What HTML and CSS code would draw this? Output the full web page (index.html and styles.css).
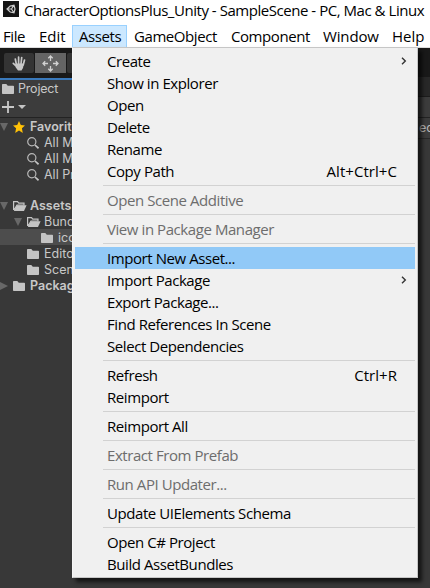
FILE: index.html
```html
<!DOCTYPE html>
<html lang="en">
<head>
<meta charset="utf-8">
<title>CharacterOptionsPlus_Unity</title>
<link rel="stylesheet" href="styles.css">
</head>
<body>
<svg class="defs" aria-hidden="true">
  <symbol id="folder" viewBox="0 0 12 10"><path d="M0 .8Q0 0 .8 0H4.300L5.800 1.700H11.200Q12 1.700 12 2.500V9.200Q12 10 11.200 10H.8Q0 10 0 9.200Z" fill="#c4c4c4"/></symbol>
  <symbol id="open" viewBox="0 0 14 10"><path d="M.6 9V.6H4.500L5.800 2.200H11V4H4L1 9" fill="none" stroke="#c4c4c4" stroke-width="1.200"/><path d="M3.800 4.300H13.600L11 10H.8Z" fill="#c4c4c4"/></symbol>
  <symbol id="search" viewBox="0 0 12 12"><circle cx="4.800" cy="4.800" r="4.100" fill="none" stroke="#b8b8b8" stroke-width="1.200"/><path d="M8 8L11.500 11.300" stroke="#c4c4c4" stroke-width="1.700"/></symbol>
  <symbol id="down" viewBox="0 0 8 8"><path d="M0 0H8L4 8Z" fill="#686868"/></symbol>
  <symbol id="chev" viewBox="0 0 6 8"><path d="M1 .8L4.300 4L1 7.200" fill="none" stroke="#333" stroke-width="1.400"/></symbol>
</svg>
<header class="title">
  <svg class="logo" viewBox="0 0 16 16"><path d="M0 0H16V16H0Z" fill="#141414"/><path d="M4 8L7.200 5L11 4.200L12 8L11 11.800L7.200 11ZM4 8H8.500L11 4.200M8.500 8L11 11.800" fill="none" stroke="#ccc" stroke-width="1.200"/></svg>
  <span class="caption">CharacterOptionsPlus_Unity - SampleScene - PC, Mac &amp; Linux</span>
</header>
<nav class="menubar">
  <span class="file">File</span><span class="edit">Edit</span><span class="assets">Assets</span><span class="object">GameObject</span><span class="component">Component</span><span class="window">Window</span><span class="help">Help</span>
</nav>
<main class="editor">
  <aside class="left">
    <div class="tools">
      <span class="tool"><svg width="15" height="15" viewBox="0 0 15 15"><path d="M4.500 9L3.300 3M6.600 8V1.200M9 8L9.700 1.500M11.200 9L12.500 4M5 11L1.300 7.300" fill="none" stroke="#c8c8c8" stroke-width="1.700" stroke-linecap="round"/><path d="M3.800 7.500H11.800L11 12L9.500 14.500H6L3.800 11.500Z" fill="#c8c8c8"/></svg></span>
      <span class="tool active"><svg width="17" height="17" viewBox="0 0 17 17"><path d="M8.500 1V6M8.500 11V16M1 8.500H6M11 8.500H16M6.300 3.200L8.500 1L10.700 3.200M6.300 13.800L8.500 16L10.700 13.800M3.200 6.300L1 8.500L3.200 10.700M13.800 6.300L16 8.500L13.800 10.700" fill="none" stroke="#d2d2d2" stroke-width="1.300"/></svg></span>
      <span class="tool"></span>
    </div>
    <div class="tab"><svg class="folder"><use href="#folder"/></svg>Project</div>
    <div class="add"><svg width="24" height="12" viewBox="0 0 24 12"><path d="M6 0V12M0 6H12" stroke="#c8c8c8" stroke-width="1.800"/><path d="M16 4H24L20 8Z" fill="#c4c4c4"/></svg></div>
    <div class="tree">
      <div class="node root"><svg class="arrow"><use href="#down"/></svg><svg class="star" viewBox="0 0 12 12"><path d="M6 0L7.800 4L12 4.400L8.900 7.300L9.800 12L6 9.600L2.200 12L3.100 7.300L0 4.400L4.200 4Z" fill="#ffc107"/></svg><span>Favorites</span></div>
      <div class="node d1"><svg class="search"><use href="#search"/></svg>All Materials</div>
      <div class="node d1"><svg class="search"><use href="#search"/></svg>All Models</div>
      <div class="node d1"><svg class="search"><use href="#search"/></svg>All Prefabs</div>
      <div class="node root project"><svg class="arrow"><use href="#down"/></svg><svg class="open"><use href="#open"/></svg><span>Assets</span></div>
      <div class="node bundle"><svg class="arrow"><use href="#down"/></svg><svg class="open"><use href="#open"/></svg>Bundles</div>
      <div class="node d2 selected"><svg class="folder"><use href="#folder"/></svg>icons</div>
      <div class="node d1"><svg class="folder"><use href="#folder"/></svg>Editor</div>
      <div class="node d1"><svg class="folder"><use href="#folder"/></svg>Scenes</div>
      <div class="node root"><svg class="arrow" viewBox="0 0 8 8"><path d="M0 0L8 4L0 8Z" fill="#686868"/></svg><svg class="folder"><use href="#folder"/></svg><span>Packages</span></div>
    </div>
  </aside>
  <section class="menu">
    <div class="item"><span>Create</span><svg class="chev"><use href="#chev"/></svg></div>
    <div class="item">Show in Explorer</div>
    <div class="item">Open</div>
    <div class="item">Delete</div>
    <div class="item">Rename</div>
    <div class="item"><span>Copy Path</span><span class="key">Alt+Ctrl+C</span></div>
    <hr>
    <div class="item off">Open Scene Additive</div>
    <hr>
    <div class="item off">View in Package Manager</div>
    <hr>
    <div class="item hot">Import New Asset...</div>
    <div class="item"><span>Import Package</span><svg class="chev"><use href="#chev"/></svg></div>
    <div class="item">Export Package...</div>
    <div class="item">Find References In Scene</div>
    <div class="item">Select Dependencies</div>
    <hr>
    <div class="item"><span>Refresh</span><span class="key">Ctrl+R</span></div>
    <div class="item">Reimport</div>
    <hr>
    <div class="item">Reimport All</div>
    <hr>
    <div class="item off">Extract From Prefab</div>
    <hr>
    <div class="item off">Run API Updater...</div>
    <hr>
    <div class="item">Update UIElements Schema</div>
    <hr>
    <div class="item">Open C# Project</div>
    <div class="item">Build AssetBundles</div>
  </section>
  <aside class="right"><div class="r1"></div><div class="r2"></div><div class="r3"></div><div class="r4">ed</div></aside>
</main>
</body>
</html>
```
FILE: styles.css
```css
* { box-sizing: border-box; }
body { margin: 0; width: 430px; height: 588px; overflow: hidden; background: #fff; color: #000; font: 15px/22px "Open Sans", "Noto Sans", sans-serif; letter-spacing: -.43px; }
svg { display: block; flex: none; }
.defs { position: absolute; width: 0; height: 0; }
.title { display: flex; height: 25px; padding-left: 3px; white-space: nowrap; }
.logo { width: 16px; height: 16px; margin-top: 1px; }
.caption { margin-left: 5px; line-height: 20px; letter-spacing: -.46px; }
.menubar { display: grid; grid-template-columns: 39px 33px 55px 97px 92px 76px 38px; height: 22px; white-space: nowrap; line-height: 22px; }
.menubar span { padding-left: 7px; }
.menubar .file { padding-left: 3px; }
.menubar .edit { padding-left: 0; letter-spacing: 0; }
.menubar .assets { background: #cce8ff; border: 1px solid #99d1ff; border-bottom: 0; padding-left: 6px; line-height: 20px; }
.menubar .window { letter-spacing: -.15px; }
.menubar .help { padding-left: 0; letter-spacing: 0; }
.editor { display: grid; grid-template-columns: 72px 346px 12px; height: 541px; background: #383838; }
.left { overflow: hidden; border-top: 1px solid #ddd; font: 12.500px/16px Inter, sans-serif; letter-spacing: 0; color: #c8c8c8; }
.tools { display: flex; gap: 1px; height: 30px; padding: 5px 0 0 4px; background: #191919; }
.tool { display: flex; align-items: center; justify-content: center; width: 30px; height: 20px; background: #343434; border-radius: 2px; flex: none; }
.tool.active { width: 31px; background: #646464; border-radius: 0; }
.tab { display: flex; align-items: center; gap: 4px; height: 20px; padding: 0 0 1px 2px; background: #3c3c3c; border-top: 2px solid #3a79bb; letter-spacing: -.2px; }
.folder { width: 12px; height: 10px; }
.add { height: 20px; padding: 3px 0 0 2px; background: #3c3c3c; border-bottom: 1px solid #232323; }
.node { display: flex; align-items: center; height: 16px; padding-top: 1px; white-space: nowrap; }
.arrow { width: 8px; height: 8px; margin-right: 5px; }
.root span { font-weight: 600; }
.star { width: 12px; height: 12px; margin-right: 5px; }
.open { width: 14px; height: 10px; margin-right: 3px; }
.node .folder { margin-right: 5px; }
.search { width: 12px; height: 12px; margin-right: 5px; }
.d1 { padding-left: 27px; }
.d2 { padding-left: 41px; }
.bundle { padding-left: 14px; }
.project { margin-top: 15px; }
.selected { background: #4d4d4d; }
.menu { height: 531px; padding: 2px; background: #f0f0f0; border: 1px solid #c6c6c6; border-left-color: #f6f6f6; box-shadow: 4px 4px 4px rgba(0,0,0,.65); z-index: 1; }
.item { display: flex; justify-content: space-between; height: 22px; padding: 0 0 0 32px; line-height: 22px; white-space: nowrap; }
.off { color: #6d6d6d; }
.hot { background: #91c9f7; }
.key { margin-right: 18px; letter-spacing: .05px; }
.chev { width: 6px; height: 8px; margin: 7px 8px 0 0; }
hr { height: 7px; margin: 0 0 0 28px; border: 0; background: linear-gradient(#d2d2d2, #d2d2d2) 0 3px / 100% 1px no-repeat; }
.right { overflow: hidden; border-top: 1px solid #ddd; color: #b8b8b8; font: 12.500px/19px Inter, sans-serif; letter-spacing: 0; }
.r1 { height: 29px; background: #191919; }
.r2 { height: 20px; background: #282828; border-bottom: 1px solid #1c1c1c; }
.r3 { height: 21px; background: #3c3c3c; border-bottom: 1px solid #232323; }
.r4 { height: 21px; padding-left: 1px; background: #3c3c3c; border-bottom: 1px solid #282828; }
```
